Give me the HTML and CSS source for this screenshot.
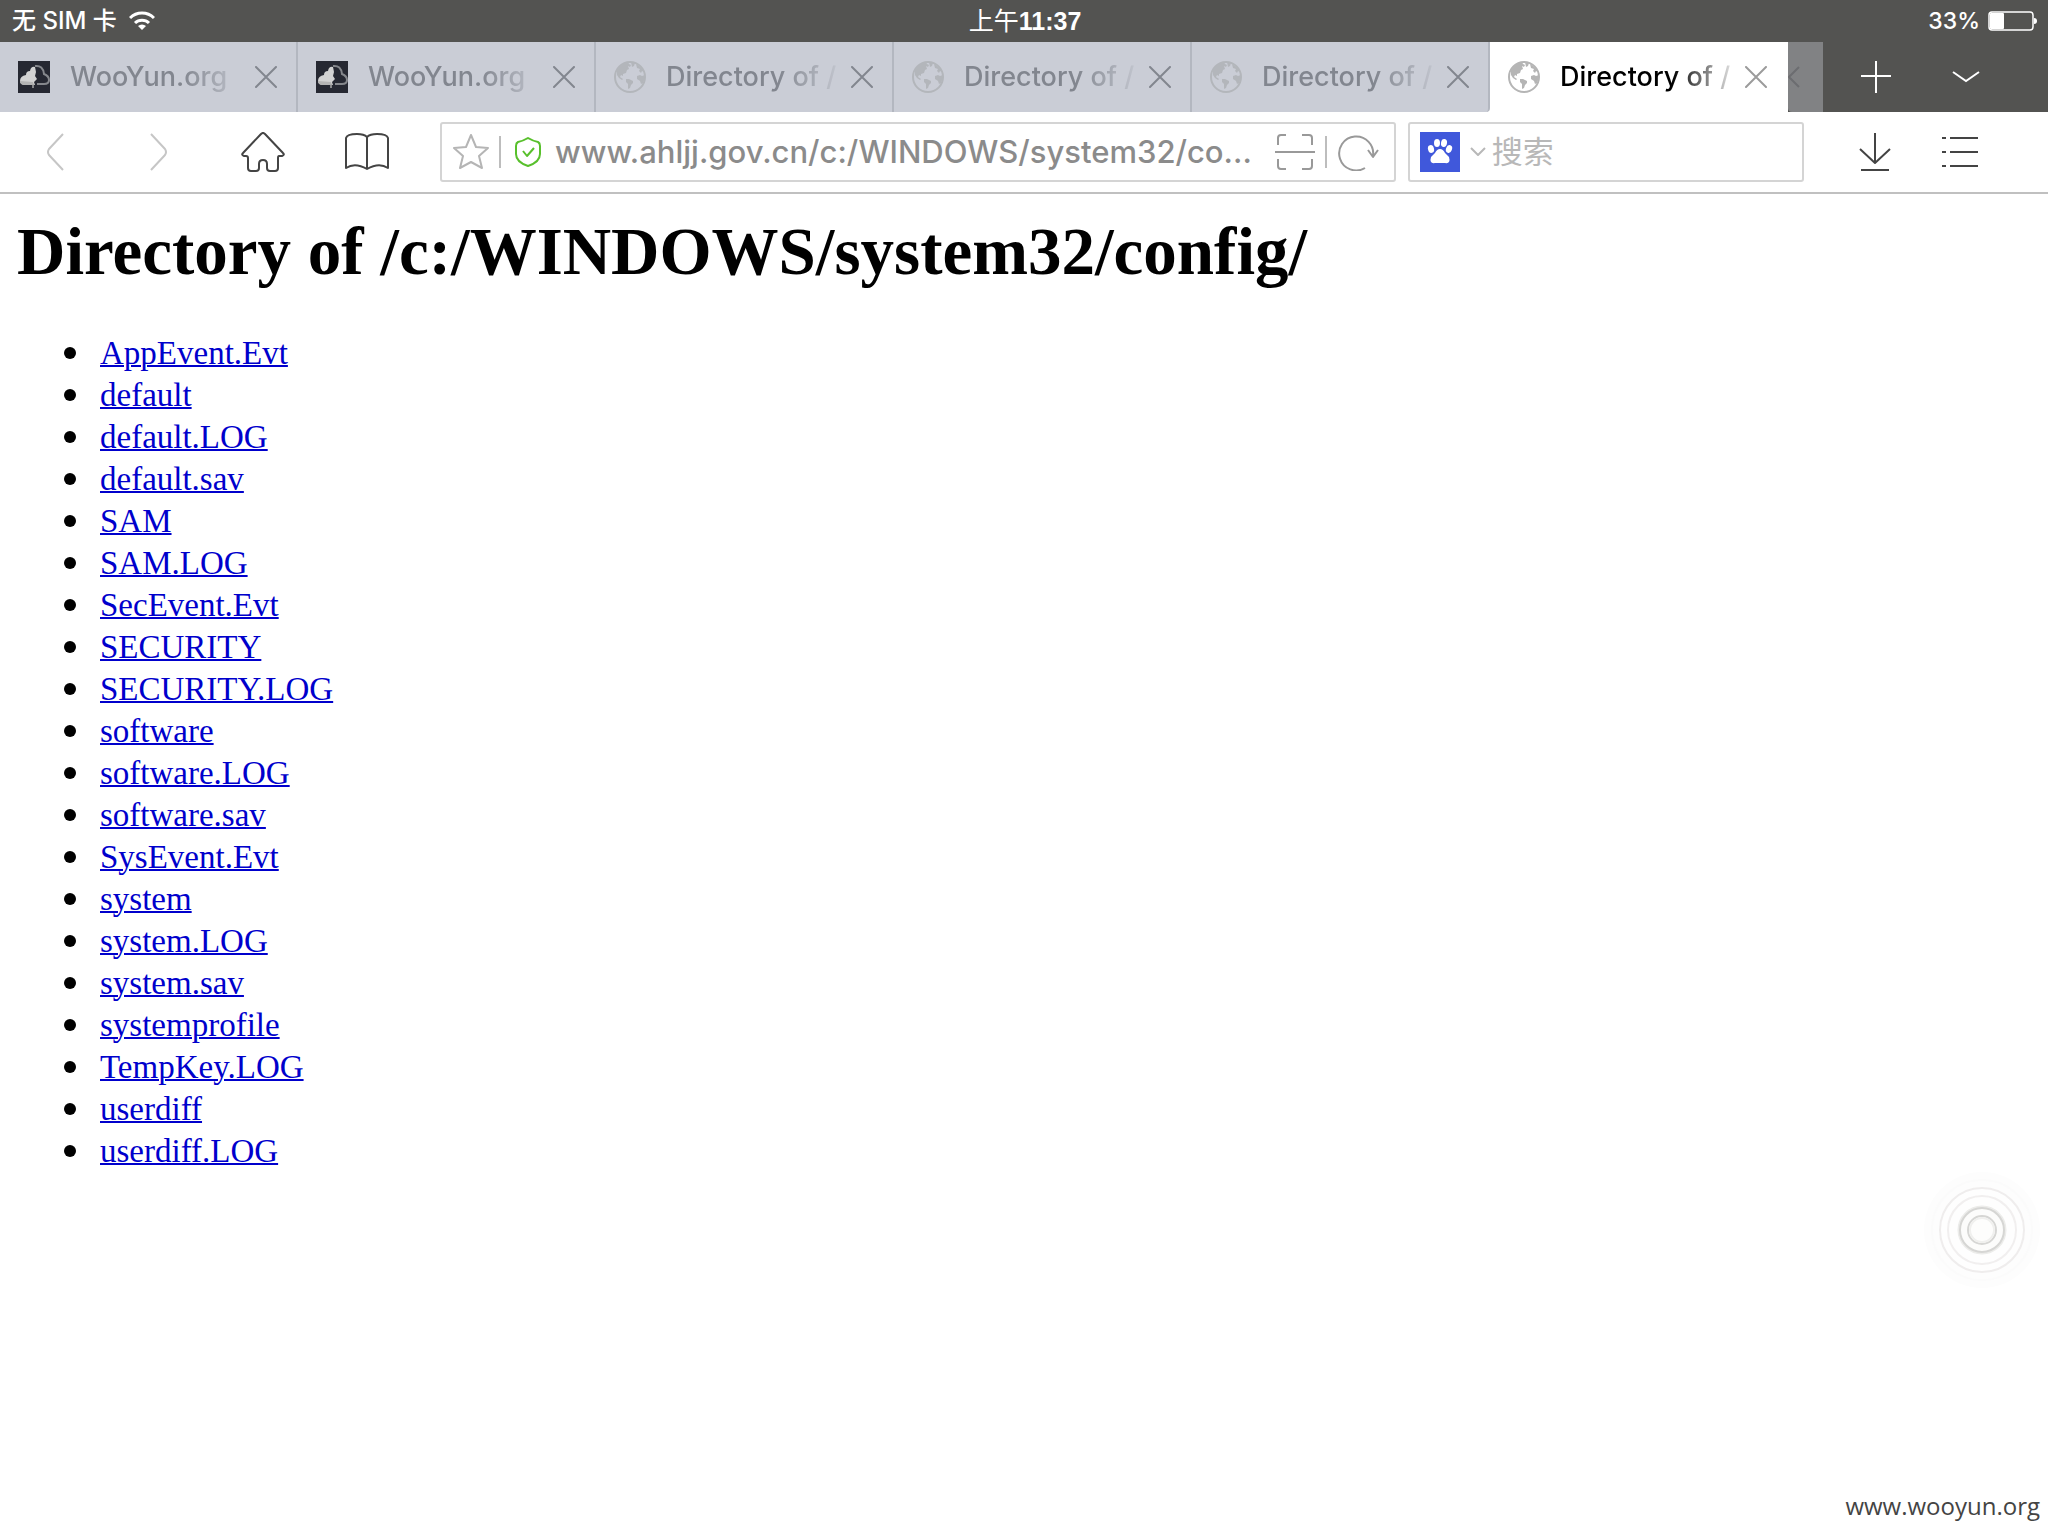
FILE: index.html
```html
<!DOCTYPE html>
<html lang="zh-CN">
<head>
    <meta charset="UTF-8">
    <meta name="viewport" content="width=device-width, initial-scale=1.0">
    <title>Directory of /c:/WINDOWS/system32/config/</title>
    <link rel="stylesheet" href="styles.css">
</head>
<body>
    <!-- Shared icons -->
    <svg class="sprite" width="0" height="0" aria-hidden="true">
        <symbol id="icon-close" viewBox="0 0 22 22">
            <path d="M1 1l20 20M21 1L1 21" fill="none" stroke="currentColor" stroke-width="2" stroke-linecap="round"></path>
        </symbol>
        <symbol id="icon-cloud" viewBox="0 0 32 32">
            <rect width="32" height="32" fill="#262832"></rect>
            <path d="M17 6q-4-1-5 4-4 0-4 4-6 1-6 6 0 4 5 4h10l-1-3 3-3-2-3 1-4z" fill="#d2d2d2"></path>
            <path d="M2 20q0 4 5 4h9l-1-3z" fill="#b4b4b4"></path>
            <path d="M17 5q8-1 9 8 5 2 5 6 0 4-5 4h-7" fill="none" stroke="#85878c" stroke-width="2"></path>
            <path d="M15 23v4" stroke="#a8a8a8" stroke-width="1.5"></path>
        </symbol>
        <symbol id="icon-globe" viewBox="0 0 32 32">
            <circle cx="16" cy="16" r="15" fill="none" stroke="currentColor" stroke-width="2"></circle>
            <path d="M3 9q3-5 8-7l3-1 1 2 2 1-1 2-2-1 1 3-2 1-1 3-3 1v2l-2-1-1 2 3 2-1 1-3-2-2-3z" fill="currentColor"></path>
            <path d="M12 18h3l4 2v2l-2 2-1 3-2 1v-5l-2-2z" fill="currentColor"></path>
            <path d="M17 1l4 1-1 3-2 1zM22 3q6 3 8 8l-2-1-1 2-2-2 1-2-3-1zM23 15l3-1 2 1 3-1q0 4-2 8l-2 1-1-3-3-2z" fill="currentColor"></path>
        </symbol>
    </svg>

    <header class="browser">
        <div class="status-bar">
            <div class="status-carrier">
                <span>无 SIM 卡</span>
                <svg width="26" height="20" viewBox="0 0 26 20" fill="none" stroke="currentColor" stroke-width="3">
                    <path d="M1 7a17 17 0 0 1 24 0"></path>
                    <path d="M6 12a10 10 0 0 1 14 0"></path>
                    <path d="M9 15a6 6 0 0 1 8 0l-4 4z" fill="currentColor" stroke="none"></path>
                </svg>
            </div>
            <div class="status-time"><span class="status-period">上午</span>11:37</div>
            <div class="status-battery">
                <span>33%</span>
                <svg width="50" height="20" viewBox="0 0 50 20">
                    <rect x="1" y="1" width="44" height="18" rx="3" fill="none" stroke="currentColor" stroke-width="1.5"></rect>
                    <rect x="2" y="2" width="14" height="16" rx="1" fill="currentColor"></rect>
                    <path d="M46 7q3 0 3 3t-3 3z" fill="currentColor"></path>
                </svg>
            </div>
        </div>

        <div class="tab-strip">
            <div class="tab">
                <svg class="tab-icon"><use href="#icon-cloud"></use></svg>
                <span class="tab-title">WooYun.org</span>
                <button class="tab-close" aria-label="关闭"><svg><use href="#icon-close"></use></svg></button>
            </div>
            <div class="tab">
                <svg class="tab-icon"><use href="#icon-cloud"></use></svg>
                <span class="tab-title">WooYun.org</span>
                <button class="tab-close" aria-label="关闭"><svg><use href="#icon-close"></use></svg></button>
            </div>
            <div class="tab">
                <svg class="tab-icon"><use href="#icon-globe"></use></svg>
                <span class="tab-title">Directory of /</span>
                <button class="tab-close" aria-label="关闭"><svg><use href="#icon-close"></use></svg></button>
            </div>
            <div class="tab">
                <svg class="tab-icon"><use href="#icon-globe"></use></svg>
                <span class="tab-title">Directory of /</span>
                <button class="tab-close" aria-label="关闭"><svg><use href="#icon-close"></use></svg></button>
            </div>
            <div class="tab tab-before-active">
                <svg class="tab-icon"><use href="#icon-globe"></use></svg>
                <span class="tab-title">Directory of /</span>
                <button class="tab-close" aria-label="关闭"><svg><use href="#icon-close"></use></svg></button>
            </div>
            <div class="tab tab-active">
                <svg class="tab-icon"><use href="#icon-globe"></use></svg>
                <span class="tab-title">Directory of /</span>
                <button class="tab-close" aria-label="关闭"><svg><use href="#icon-close"></use></svg></button>
            </div>
            <div class="tab-overflow">
                <svg width="12" height="22" viewBox="0 0 12 22" fill="none" stroke="currentColor" stroke-width="2">
                    <path d="M11 1L1 11l10 10"></path>
                </svg>
            </div>
            <div class="tab-actions">
                <button class="strip-button" aria-label="新标签页">
                    <svg width="30" height="32" viewBox="0 0 30 32" fill="none" stroke="currentColor" stroke-width="2">
                        <path d="M15 0v32M0 15h30"></path>
                    </svg>
                </button>
                <button class="strip-button" aria-label="标签列表">
                    <svg width="28" height="12" viewBox="0 0 28 12" fill="none" stroke="currentColor" stroke-width="2">
                        <path d="M1 1l13 9 13-9"></path>
                    </svg>
                </button>
            </div>
        </div>

        <div class="toolbar">
            <nav class="nav-buttons">
                <button class="nav-button nav-disabled" aria-label="后退">
                    <svg width="18" height="38" viewBox="0 0 18 38"><path d="M17 1L3 16q-2 3 0 6l14 15"></path></svg>
                </button>
                <button class="nav-button nav-disabled" aria-label="前进">
                    <svg width="18" height="38" viewBox="0 0 18 38"><path d="M1 1l14 15q2 3 0 6L1 37"></path></svg>
                </button>
                <button class="nav-button" aria-label="主页">
                    <svg width="44" height="40" viewBox="0 0 44 40"><path d="M20 2q2-2 4 0l18 19q2 2-1 3h-3q-1 0-1 2v10q0 3-3 3h-5q-3 0-3-3v-4q0-4-4-4t-4 4v4q0 3-3 3h-5q-3 0-3-3V26q0-2-2-2H3q-3-1-1-3z"></path></svg>
                </button>
                <button class="nav-button" aria-label="书签">
                    <svg width="44" height="38" viewBox="0 0 44 38"><path d="M22 3v33M22 4q-3-3-10-3-10 0-11 4v30q9-6 21 1 12-7 21-1V5q-1-4-11-4-7 0-10 3"></path></svg>
                </button>
            </nav>

            <form class="address-box">
                <button type="button" class="box-button" aria-label="收藏">
                    <svg width="36" height="36" viewBox="0 0 36 36"><path d="M18 1l5 12 12 1-9 8 3 12-11-6-11 6 3-12-9-8 12-1z" stroke="#b5b5b5"></path></svg>
                </button>
                <span class="divider divider-star"></span>
                <svg class="shield" width="26" height="30" viewBox="0 0 26 30"><path d="M13 1q5 3 10 4 2 1 2 4v8q0 8-12 12Q1 25 1 17V9q0-3 2-4 5-1 10-4z"></path><path d="M8 14l4 5 7-8"></path></svg>
                <input class="address-input" type="text" aria-label="网址" value="www.ahljj.gov.cn/c:/WINDOWS/system32/co...">
                <button type="button" class="box-button" aria-label="扫描">
                    <svg width="40" height="38" viewBox="0 0 40 38"><path d="M0 19h40M3 12V5q0-3 3-3h5M27 2h7q3 0 3 3v7M3 26v7q0 3 3 3h5M27 36h7q3 0 3-3v-7"></path></svg>
                </button>
                <span class="divider"></span>
                <button type="button" class="box-button" aria-label="刷新">
                    <svg width="42" height="38" viewBox="0 0 42 38"><path d="M28 35A17 17 0 1 1 36 23M31 17l5 7 5-7"></path></svg>
                </button>
            </form>

            <form class="search-box">
                <svg width="40" height="40" viewBox="0 0 40 40">
                    <rect width="40" height="40" fill="#4058db"></rect>
                    <g fill="#ffffff">
                        <ellipse cx="11" cy="17" rx="3" ry="4" transform="rotate(-15 11 17)"></ellipse>
                        <ellipse cx="17" cy="11" rx="3" ry="4"></ellipse>
                        <ellipse cx="24" cy="11" rx="3" ry="4" transform="rotate(10 24 11)"></ellipse>
                        <ellipse cx="29" cy="17" rx="3" ry="4" transform="rotate(20 29 17)"></ellipse>
                        <path d="M20 17q3 0 5 4l4 4q2 7-4 6h-10q-6 1-4-6l4-4q2-4 5-4z"></path>
                    </g>
                </svg>
                <svg width="16" height="10" viewBox="0 0 16 10" fill="none" stroke="#b8b8b8" stroke-width="2"><path d="M1 1l7 7 7-7"></path></svg>
                <input class="search-input" type="text" aria-label="搜索" placeholder="搜索">
            </form>

            <div class="tool-buttons">
                <button class="tool-button" aria-label="下载">
                    <svg width="32" height="38" viewBox="0 0 32 38"><path d="M16 0v30M1 16l15 14 15-14M2 37h28"></path></svg>
                </button>
                <button class="tool-button" aria-label="菜单">
                    <svg width="36" height="32" viewBox="0 0 36 32"><path d="M0 2h4M8 2h28M0 16h4M8 16h28M0 30h4M8 30h28"></path></svg>
                </button>
            </div>
        </div>
    </header>

    <main class="page">
        <h1 class="page-title">Directory of /c:/WINDOWS/system32/config/</h1>
        <ul class="file-list">
            <li><a href="#">AppEvent.Evt</a></li>
            <li><a href="#">default</a></li>
            <li><a href="#">default.LOG</a></li>
            <li><a href="#">default.sav</a></li>
            <li><a href="#">SAM</a></li>
            <li><a href="#">SAM.LOG</a></li>
            <li><a href="#">SecEvent.Evt</a></li>
            <li><a href="#">SECURITY</a></li>
            <li><a href="#">SECURITY.LOG</a></li>
            <li><a href="#">software</a></li>
            <li><a href="#">software.LOG</a></li>
            <li><a href="#">software.sav</a></li>
            <li><a href="#">SysEvent.Evt</a></li>
            <li><a href="#">system</a></li>
            <li><a href="#">system.LOG</a></li>
            <li><a href="#">system.sav</a></li>
            <li><a href="#">systemprofile</a></li>
            <li><a href="#">TempKey.LOG</a></li>
            <li><a href="#">userdiff</a></li>
            <li><a href="#">userdiff.LOG</a></li>
        </ul>
    </main>

    <footer class="watermark">www.wooyun.org</footer>

    <button class="touch-button" aria-label="辅助触控">
        <svg width="120" height="120" viewBox="0 0 120 120" fill="none">
            <circle cx="60" cy="60" r="58" fill="#fdfdfd"></circle>
            <circle cx="60" cy="60" r="50" stroke="#fbfbfb" stroke-width="2"></circle>
            <circle cx="60" cy="60" r="42" fill="#fefefe" stroke="#efeded" stroke-width="2"></circle>
            <circle cx="60" cy="60" r="34" stroke="#f1efef" stroke-width="2"></circle>
            <circle cx="60" cy="60" r="23" stroke="#ececea" stroke-width="3"></circle>
            <circle cx="60" cy="60" r="22" fill="#fcfcfb" stroke="#d6d6d4" stroke-width="2"></circle>
            <circle cx="60" cy="60" r="14" fill="#fdfdfc" stroke="#d6d6d4" stroke-width="2"></circle>
            <circle cx="60" cy="60" r="12" stroke="#f0f0ee" stroke-width="2"></circle>
        </svg>
    </button>
</body>
</html>
```
FILE: styles.css
```css
* {
    margin: 0;
    padding: 0;
    box-sizing: border-box;
}

body {
    font-family: Inter, "Noto Sans CJK SC", sans-serif;
    background-color: #ffffff;
    min-height: 100vh;
    display: flex;
    flex-direction: column;
}

svg {
    display: block;
    flex-shrink: 0;
}

button {
    border: none;
    background: none;
    color: inherit;
    cursor: pointer;
    display: flex;
    align-items: center;
    justify-content: center;
}

input {
    border: none;
    background: none;
    outline: none;
    min-width: 0;
    font-family: inherit;
}

.sprite {
    position: absolute;
}

/* Status bar */
.status-bar {
    height: 42px;
    padding: 0 10px 0 12px;
    background-color: #535351;
    color: #ffffff;
    font-family: "Liberation Sans", "Noto Sans CJK SC", sans-serif;
    font-size: 24px;
    line-height: 42px;
    display: grid;
    grid-template-columns: 1fr auto 1fr;
    align-items: center;
}

.status-carrier,
.status-battery {
    display: flex;
    align-items: center;
    font-family: Inter, "Noto Sans CJK SC", sans-serif;
    font-weight: 500;
}

.status-carrier {
    gap: 12px;
}

.status-battery {
    justify-content: flex-end;
    gap: 8px;
    font-size: 23px;
}

.status-time {
    font-size: 25px;
    font-weight: bold;
}

.status-period {
    font-weight: normal;
}

/* Tabs */
.tab-strip {
    height: 70px;
    display: flex;
    background-color: #535351;
}

.tab {
    flex: 1;
    min-width: 0;
    display: flex;
    align-items: center;
    padding: 0 19px 0 18px;
    background-color: #cacdd6;
    border-right: 2px solid #b3b7c0;
    color: #82868f;
}

.tab-icon {
    width: 32px;
    height: 32px;
    margin-right: 20px;
    color: #b3b6bb;
}

.tab-title {
    flex: 1;
    min-width: 0;
    overflow: hidden;
    white-space: nowrap;
    font-size: 27px;
    font-weight: 500;
    line-height: 36px;
    -webkit-mask-image: linear-gradient(to right, #000 112px, transparent 180px);
    mask-image: linear-gradient(to right, #000 112px, transparent 180px);
}

.tab-close {
    margin-left: 12px;
}

.tab-close svg {
    width: 22px;
    height: 22px;
}

.tab-before-active {
    border-bottom-right-radius: 4px;
    box-shadow: 4px 0 0 #ffffff;
}

.tab-active {
    background-color: #ffffff;
    border-right-color: #ffffff;
    color: #000000;
}

.tab-active .tab-icon {
    color: #b5b5b5;
}

.tab-active .tab-close {
    color: #9b9b9b;
}

.tab-overflow {
    width: 35px;
    display: flex;
    align-items: center;
    background-color: #818284;
    color: #6c6d70;
    border-bottom-left-radius: 4px;
}

.tab-actions {
    display: flex;
    padding: 0 37px 0 8px;
    color: #ffffff;
}

.strip-button {
    width: 90px;
}

/* Toolbar */
.toolbar {
    height: 82px;
    padding: 0 46px 0 3px;
    border-bottom: 2px solid #c0c0c0;
    display: flex;
    align-items: center;
}

.toolbar path {
    stroke-linejoin: round;
}

.nav-buttons,
.tool-buttons {
    display: flex;
    fill: none;
    stroke: #444444;
    stroke-width: 2;
}

.nav-button {
    width: 104px;
    height: 60px;
}

.nav-disabled {
    stroke: #c6c6c6;
}

.address-box,
.search-box {
    min-width: 0;
    height: 60px;
    border: 2px solid #d4d4d4;
    border-radius: 3px;
    display: flex;
    align-items: center;
}

.address-box {
    flex: 925;
    margin: 0 12px 0 21px;
    padding: 0 15px 0 11px;
    fill: none;
    stroke: #999999;
    stroke-width: 2;
}

.divider {
    width: 2px;
    height: 32px;
    margin: 0 10px;
    background-color: #bdbdbd;
}

.divider-star {
    margin-right: 14px;
}

.shield {
    stroke: #58c02c;
    margin-right: 14px;
}

.address-input {
    flex: 1;
    margin-right: 20px;
    font-size: 31px;
    font-weight: 500;
    line-height: 40px;
    color: #8b8b8b;
}

.search-box {
    flex: 372;
    padding: 0 10px;
    gap: 10px;
}

.search-input {
    flex: 1;
    margin-left: -4px;
    font-size: 31px;
    line-height: 40px;
    color: #444444;
}

.search-input::placeholder {
    color: #b8b8b8;
    opacity: 1;
}

.tool-buttons {
    margin-left: 28px;
}

.tool-button {
    width: 85px;
    height: 60px;
}

/* Directory listing */
.page {
    padding: 19px 17px;
    font-family: "Liberation Serif", serif;
    color: #000000;
}

.page-title {
    font-size: 67px;
    line-height: 76px;
    margin-bottom: 43px;
}

.file-list {
    padding-left: 47px;
    list-style: none;
    font-size: 33px;
    line-height: 42px;
}

.file-list li {
    display: flex;
    align-items: center;
    gap: 24px;
}

.file-list li::before {
    content: "";
    width: 12px;
    height: 12px;
    border-radius: 50%;
    background-color: #000000;
}

.file-list a {
    color: #0000cc;
    text-decoration-thickness: 2px;
}

.watermark {
    margin-top: auto;
    padding: 0 8px 12px;
    text-align: right;
    font-family: "Open Sans", sans-serif;
    font-size: 24px;
    line-height: 36px;
    color: #444444;
}

/* Floating button over the page */
.touch-button {
    position: fixed;
    right: 6px;
    bottom: 246px;
}
```
